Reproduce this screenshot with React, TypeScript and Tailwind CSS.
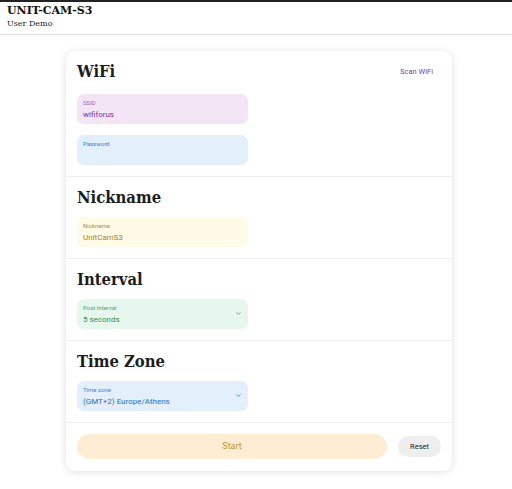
import { ChevronDown } from 'lucide-react';

const serif = { fontFamily: '"DejaVu Serif", serif' };
const headingFont = { fontFamily: '"DejaVu Serif Condensed", "DejaVu Serif", serif', fontStretch: 'condensed' };

function Field({ label, value, bg, labelColor, valueColor, select }: {
    label: string;
    value?: string;
    bg: string;
    labelColor: string;
    valueColor: string;
    select?: boolean;
}) {
    return (
        <div className={`relative w-[171px] h-[30px] rounded-[7px] ${bg} px-[6px] pt-[5px]`}>
            <div className={`text-[6px] leading-[8px] ${labelColor}`}>{label}</div>
            {value && <div className={`text-[8px] leading-[11px] mt-[2px] ${valueColor}`}>{value}</div>}
            {select && (
                <ChevronDown
                    size={7}
                    strokeWidth={2.5}
                    className={`absolute right-[6px] top-[11px] ${valueColor}`}
                />
            )}
        </div>
    );
}

function Heading({ children }: { children: React.ReactNode }) {
    return (
        <h2 className="text-[16.5px] leading-[22px] font-bold text-[#1c1c1c]" style={headingFont}>
            {children}
        </h2>
    );
}

export default function App() {
    return (
        <div className="min-h-[489px] bg-white" style={{ fontFamily: 'Roboto, sans-serif' }}>
            <div className="h-[2px] bg-[#222]" />
            <header className="h-[33px] border-b border-[#e2e2e2] px-[7px] pt-[1px]" style={serif}>
                <div className="text-[11px] leading-[15px] font-bold text-[#111]">UNIT-CAM-S3</div>
                <div className="text-[8px] leading-[12px] text-[#222]">User Demo</div>
            </header>

            <div className="pl-[66px] pt-[16px]">
                <div className="w-[386px] rounded-[9px] bg-white shadow-[0_1px_8px_rgba(0,0,0,0.12)] overflow-hidden">
                    <section className="px-[11px] pt-[10px] pb-[11px] border-b border-[#eeeeee]">
                        <div className="flex items-center justify-between">
                            <Heading>WiFi</Heading>
                            <span className="text-[7.5px] text-[#7e3aa6] mr-[8px]">Scan WiFi</span>
                        </div>
                        <div className="mt-[11px] flex flex-col gap-[11px]">
                            <Field label="SSID" value="wififorus" bg="bg-[#f3e5f6]" labelColor="text-[#a35bc0]" valueColor="text-[#7b2f9e]" />
                            <Field label="Password" bg="bg-[#e4effc]" labelColor="text-[#2f7fd6]" valueColor="text-[#1f6fc9]" />
                        </div>
                    </section>

                    <section className="px-[11px] pt-[10px] pb-[11px] border-b border-[#eeeeee]">
                        <Heading>Nickname</Heading>
                        <div className="mt-[8px]">
                            <Field label="Nickname" value="UnitCamS3" bg="bg-[#fffbe6]" labelColor="text-[#b98a2e]" valueColor="text-[#b07d25]" />
                        </div>
                    </section>

                    <section className="px-[11px] pt-[10px] pb-[11px] border-b border-[#eeeeee]">
                        <Heading>Interval</Heading>
                        <div className="mt-[8px]">
                            <Field label="Post Interval" value="5 seconds" bg="bg-[#e8f7ee]" labelColor="text-[#3fa864]" valueColor="text-[#2a8f4c]" select />
                        </div>
                    </section>

                    <section className="px-[11px] pt-[10px] pb-[11px] border-b border-[#eeeeee]">
                        <Heading>Time Zone</Heading>
                        <div className="mt-[8px]">
                            <Field label="Time zone" value="(GMT+2) Europe/Athens" bg="bg-[#e4effc]" labelColor="text-[#3a86d8]" valueColor="text-[#2270c8]" select />
                        </div>
                    </section>

                    <div className="flex items-center gap-[11px] px-[11px] pt-[11px] pb-[12px]">
                        <button className="flex-1 h-[25px] rounded-full bg-[#feedd2] text-[9px] text-[#c7922f]">
                            Start
                        </button>
                        <button className="w-[43px] h-[21px] rounded-full bg-[#eeeeee] text-[7.5px] text-[#222]">
                            Reset
                        </button>
                    </div>
                </div>
            </div>
        </div>
    );
}
